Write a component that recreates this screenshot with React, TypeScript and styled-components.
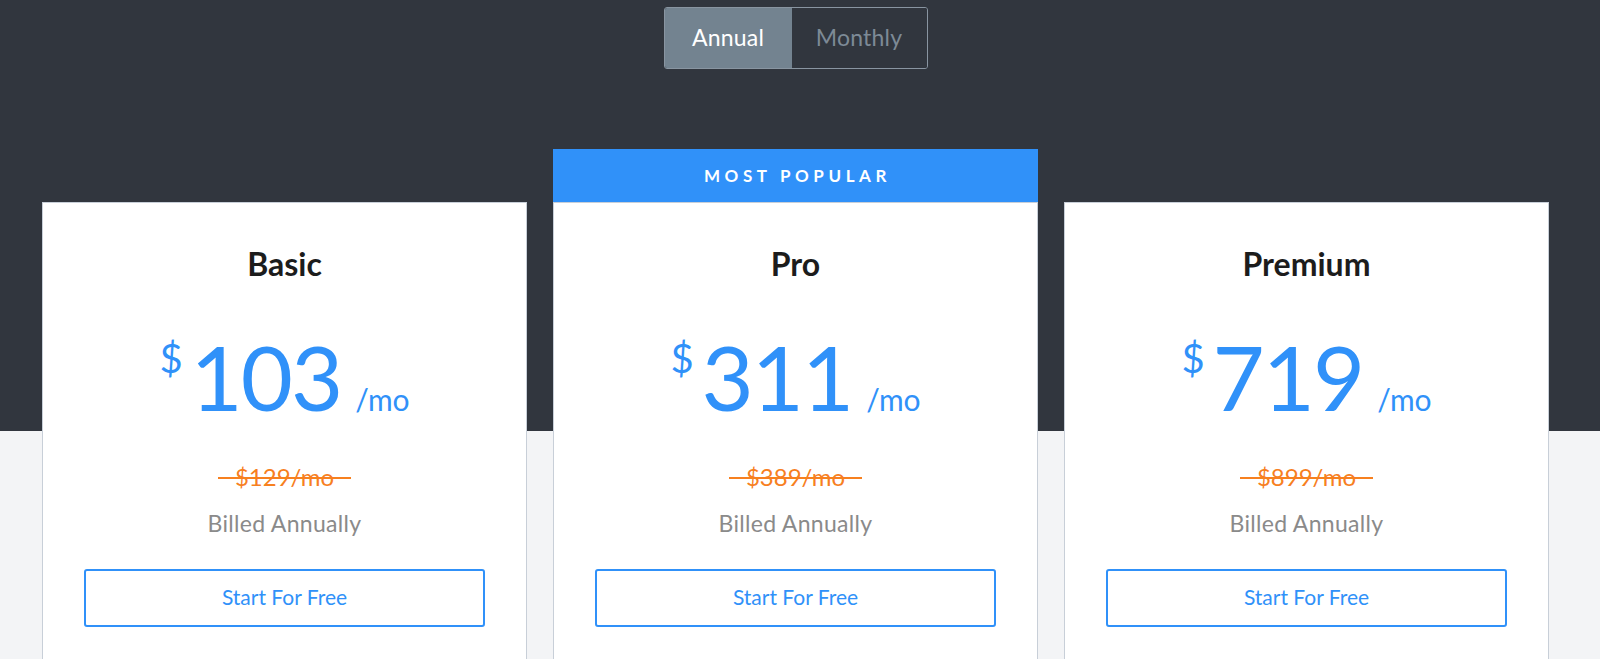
import React from "react";
import styled, { createGlobalStyle } from "styled-components";

const GlobalStyle = createGlobalStyle`
  html, body {
    margin: 0;
    padding: 0;
    overflow: hidden;
  }
  body {
    font-family: "Lato", "Liberation Sans", sans-serif;
    -webkit-font-smoothing: antialiased;
  }
  * { box-sizing: border-box; }
`;

const Page = styled.div`
  height: 659px;
  overflow: hidden;
  background: linear-gradient(to bottom, #31363e 0, #31363e 431px, #f3f4f6 431px);
`;

const Container = styled.div`
  width: 1507px;
  margin-left: 42px;
  padding-top: 7px;
  display: flex;
  flex-direction: column;
  align-items: center;
`;

const Toggle = styled.div`
  display: flex;
  height: 62px;
  border: 1px solid #8995a1;
  border-radius: 3px;
  overflow: hidden;
`;

const ToggleButton = styled.button<{ $active?: boolean }>`
  border: none;
  margin: 0;
  padding: 0 0 2px;
  font-family: "Lato", "Liberation Sans", sans-serif;
  font-size: 23px;
  font-weight: 400;
  letter-spacing: 0.2px;
  cursor: pointer;
  background: ${(p) => (p.$active ? "#738390" : "#31363e")};
  color: ${(p) => (p.$active ? "#ffffff" : "#7d8a96")};
  width: ${(p) => (p.$active ? "127px" : "135px")};
`;

const Row = styled.div`
  margin-top: 80px;
  width: 100%;
  display: grid;
  grid-template-columns: repeat(3, 1fr);
  column-gap: 26px;
  align-items: end;
`;

const Column = styled.div`
  display: flex;
  flex-direction: column;
`;

const Banner = styled.div`
  height: 53px;
  background: #3091f9;
  color: #ffffff;
  font-size: 17px;
  font-weight: 700;
  letter-spacing: 4.6px;
  display: flex;
  align-items: center;
  justify-content: center;
  padding-left: 4px;
`;

const Card = styled.div`
  background: #ffffff;
  border: 1px solid #c8cfd8;
  height: 520px;
  padding: 41px 41px 0;
  display: flex;
  flex-direction: column;
  align-items: center;
`;

const Title = styled.h2`
  margin: 0;
  font-size: 32px;
  line-height: 40px;
  font-weight: 700;
  color: #1c1c1c;
`;

const PriceRow = styled.div`
  margin-top: 47px;
  display: flex;
  align-items: baseline;
  justify-content: center;
  color: #3091f9;
`;

const Dollar = styled.span`
  align-self: flex-start;
  margin-top: 7px;
  margin-right: 8px;
  font-size: 40px;
  line-height: 1;
  font-weight: 400;
`;

const Amount = styled.span`
  font-size: 90px;
  line-height: 1;
  font-weight: 400;
  letter-spacing: -2px;
`;

const Per = styled.span`
  margin-left: 14px;
  font-size: 30px;
  line-height: 1;
  font-weight: 400;
`;

const OldPrice = styled.div`
  position: relative;
  margin-top: 41px;
  padding: 0 17px;
  font-size: 24px;
  line-height: 30px;
  color: #f7801f;
  &::after {
    content: "";
    position: absolute;
    left: 0;
    right: 0;
    top: 15px;
    height: 2px;
    background: #f7801f;
  }
`;

const Billed = styled.div`
  margin-top: 16px;
  font-size: 23px;
  line-height: 30px;
  letter-spacing: 0.3px;
  color: #8a8a8a;
`;

const CtaButton = styled.button`
  margin-top: 31px;
  width: 100%;
  height: 58px;
  padding: 0 0 3px;
  background: #ffffff;
  border: 2px solid #3091f9;
  border-radius: 3px;
  color: #3091f9;
  font-family: "Lato", "Liberation Sans", sans-serif;
  font-size: 21px;
  font-weight: 400;
  cursor: pointer;
`;

type Plan = {
  name: string;
  price: string;
  old: string;
  featured?: boolean;
};

const plans: Plan[] = [
  { name: "Basic", price: "103", old: "$129/mo" },
  { name: "Pro", price: "311", old: "$389/mo", featured: true },
  { name: "Premium", price: "719", old: "$899/mo" },
];

export default function App() {
  return (
    <Page>
      <GlobalStyle />
      <Container>
        <Toggle>
          <ToggleButton $active>Annual</ToggleButton>
          <ToggleButton>Monthly</ToggleButton>
        </Toggle>
        <Row>
          {plans.map((p) => (
            <Column key={p.name}>
              {p.featured && <Banner>MOST POPULAR</Banner>}
              <Card>
                <Title>{p.name}</Title>
                <PriceRow>
                  <Dollar>$</Dollar>
                  <Amount>{p.price}</Amount>
                  <Per>/mo</Per>
                </PriceRow>
                <OldPrice>{p.old}</OldPrice>
                <Billed>Billed Annually</Billed>
                <CtaButton>Start For Free</CtaButton>
              </Card>
            </Column>
          ))}
        </Row>
      </Container>
    </Page>
  );
}
